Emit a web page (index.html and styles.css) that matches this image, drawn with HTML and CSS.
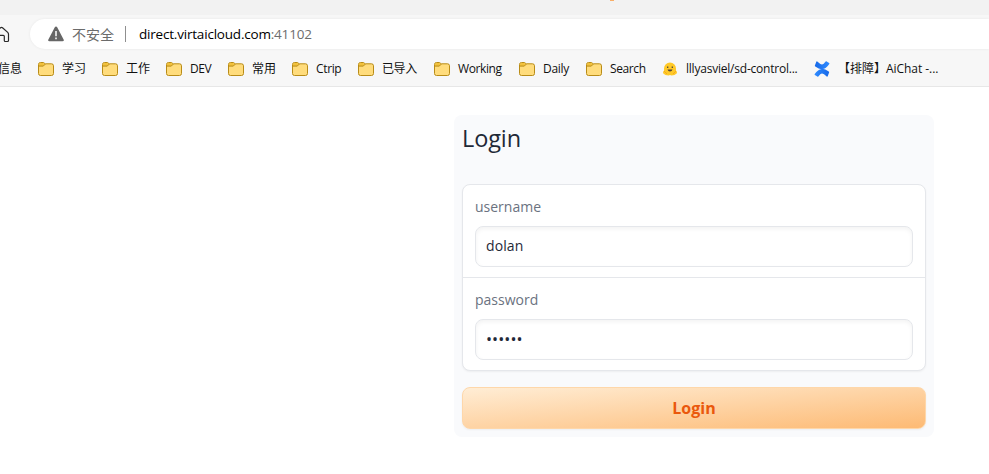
FILE: index.html
```
<!DOCTYPE html>
<html lang="zh-CN">
<head>
<meta charset="utf-8">
<title>Login</title>
<link rel="stylesheet" href="styles.css">
</head>
<body>
<svg width="0" height="0" class="defs" aria-hidden="true">
  <defs>
    <linearGradient id="blue" x1="0" y1="0" x2="1" y2="0"><stop offset="0" stop-color="#1769e8"/><stop offset="1" stop-color="#2f8bff"/></linearGradient>
    <symbol id="folder" viewBox="0 0 16 14">
      <path d="M.5 2.5a2 2 0 0 1 2-2h3l1.700 1.300h6.300a2 2 0 0 1 2 2v7.700a2 2 0 0 1-2 2h-11a2 2 0 0 1-2-2z" fill="#ffdc7c" stroke="#b98c17"/>
      <path d="M1 2.500A1.500 1.500 0 0 1 2.500 1h2.800L7 2.200 5.300 4H1z" fill="#f2c13c"/>
      <path d="M.8 4.100h4.500l2-2" fill="none" stroke="#b98c17"/>
    </symbol>
  </defs>
</svg>
<header class="chrome">
  <div class="tabstrip"><span class="tab-dot"></span></div>
  <div class="toolbar">
    <svg class="home" width="10" height="17" viewBox="0 0 10 17"><path d="M-6 8 .5 1.800q1-.9 2 0L7.700 6.400q.8.800.8 1.800v6.300q0 1-1 1H5.200q-.9 0-.9-1v-4.200q0-1-1-1H0" fill="none" stroke="#292929" stroke-width="1.200"/></svg>
    <div class="address">
      <svg width="16" height="16" viewBox="0 0 16 16"><path d="M8 .5q.8 0 1.200.8l6.400 12.100q.9 1.800-1.100 1.800h-13Q-.5 15.200.4 13.400L6.800 1.300Q7.200.5 8 .5z" fill="#666"/><path d="M8 5v5.200M8 11.500v1.700" stroke="#fff" stroke-width="1.500"/></svg>
      <span class="insecure">不安全</span>
      <span class="sep"></span>
      <span class="url">direct.virtaicloud.com<span class="port">:41102</span></span>
    </div>
  </div>
  <nav class="bookmarks">
    <span class="cut">信息</span>
    <a class="bm"><svg class="folder"><use href="#folder"/></svg><span class="w24">学习</span></a>
    <a class="bm"><svg class="folder"><use href="#folder"/></svg><span class="w24">工作</span></a>
    <a class="bm"><svg class="folder"><use href="#folder"/></svg><span class="w22">DEV</span></a>
    <a class="bm"><svg class="folder"><use href="#folder"/></svg><span class="w24">常用</span></a>
    <a class="bm"><svg class="folder"><use href="#folder"/></svg><span class="w26">Ctrip</span></a>
    <a class="bm"><svg class="folder"><use href="#folder"/></svg><span class="w36">已导入</span></a>
    <a class="bm"><svg class="folder"><use href="#folder"/></svg><span class="w45">Working</span></a>
    <a class="bm"><svg class="folder"><use href="#folder"/></svg><span class="w27">Daily</span></a>
    <a class="bm"><svg class="folder"><use href="#folder"/></svg><span class="w36">Search</span></a>
    <a class="bm"><svg width="16" height="16" viewBox="0 0 16 16"><path d="M8 1.500a6 6 0 0 1 6 6v2q1.700 1.500.7 3-1.800 2-5.200 2l-1.500-.5-1.500.5q-3.400 0-5.200-2-1-1.500.7-3v-2a6 6 0 0 1 6-6z" fill="#ffc928"/><path d="M5.700 5.500v1.500M10.300 5.500v1.500" stroke="#45413e" stroke-width="1.200"/><path d="M5.500 8.600h5Q10 10.600 8 10.600T5.500 8.600z" fill="#594430"/><path d="m2 10 3 3M14 10l-3 3" stroke="#f6a91e"/></svg><span class="w112">lllyasviel/sd-control...</span></a>
    <a class="bm"><svg width="16" height="16" viewBox="0 0 16 16"><path id="wave" d="M2.300.7.900 4.500q-.3.700.4 1.100 3.900 2.800 7 2.500 3.700-.3 7-5.100.4-.6-.2-.9L12.300.3q-.5-.2-.9.400-1.700 2.500-3.300 2.700-1.600.2-4.800-2.900-.6-.5-1 .2z" fill="url(#blue)"/><use href="#wave" transform="rotate(180 8 8)"/></svg><span class="chat">【排障】AiChat -...</span></a>
  </nav>
</header>
<main>
  <form class="card">
    <h1>Login</h1>
    <div class="fields">
      <label><span>username</span><input type="text" value="dolan"></label>
      <label><span>password</span><input class="secret" type="password" value="dolan1"></label>
    </div>
    <button type="button">Login</button>
  </form>
</main>
</body>
</html>
```
FILE: styles.css
```
* { box-sizing: border-box; }
body { margin: 0; width: 989px; height: 474px; overflow: hidden; background: #fff; font-family: "Open Sans", "Noto Sans CJK SC", sans-serif; }
svg { flex: none; display: block; }
.defs { position: absolute; }
.chrome { height: 87px; background: #f7f7f7; border-bottom: 1px solid #e7e7e7; }
.tabstrip { height: 15px; background: #f2f2f2; display: flex; }
.tab-dot { width: 4px; height: 1px; margin-left: 610px; background: #f8ae68; }
.toolbar { height: 38px; display: flex; padding-top: 4px; }
.home { margin: 7px 20px 0 0; }
.address { flex: 1; height: 30px; background: #fff; border-radius: 15px 0 0 15px; display: flex; align-items: center; padding-left: 18px; box-shadow: 0 0 3px #0001; white-space: nowrap; }
.insecure { width: 42px; margin-left: 8px; color: #6b6b6b; font-size: 14px; }
.sep { width: 1px; height: 16px; margin: 0 13px 0 11px; background: #8f8f8f; }
.url { color: #000; font-size: 13.500px; letter-spacing: -.2px; }
.port { color: #6d6d6d; }
.bookmarks { height: 32px; display: flex; align-items: center; gap: 16px; font-size: 12px; line-height: 18px; color: #111; white-space: nowrap; }
.cut { width: 22px; direction: rtl; }
.bm { display: flex; align-items: center; gap: 8px; }
.folder { width: 16px; height: 14px; }
.w22 { width: 22px; letter-spacing: -.5px; }
.w24 { width: 24px; }
.w26 { width: 26px; letter-spacing: -.35px; }
.w27 { width: 27px; letter-spacing: -.3px; }
.w36 { width: 36px; letter-spacing: -.4px; }
.w45 { width: 45px; letter-spacing: -.4px; }
.w112 { width: 112px; letter-spacing: -.22px; }
.chat { letter-spacing: -.03px; }
main { padding: 28px 0 0 454px; }
.card { width: 480px; height: 322px; padding: 8px; border-radius: 8px; background: #f9fafc; }
h1 { margin: 0; height: 61px; font-size: 23.500px; line-height: 31px; font-weight: 400; color: #1f2937; letter-spacing: -.1px; }
.fields { height: 187px; border: 1px solid #e5e7eb; border-radius: 8px; background: #fff; box-shadow: 0 1px 2px #0000000d; }
label { display: block; height: 92px; padding: 12px; font-size: 14px; line-height: 19px; color: #6b7280; }
label + label { height: 93px; border-top: 1px solid #e5e7eb; }
label span { display: block; height: 29px; }
input { display: block; width: 438px; height: 41px; padding: 0 10px 2px; border: 1px solid #e5e7eb; border-radius: 8px; background: #fff; box-shadow: inset 0 2px 4px #0000000d; font: 14px "Open Sans", sans-serif; letter-spacing: .1px; color: #1f2937; outline: 0; }
.secret { font-size: 16px; letter-spacing: .1px; }
button { display: block; width: 464px; height: 42px; margin-top: 16px; border: 1px solid #fed7aa; border-radius: 8px; background: linear-gradient(to bottom right, #ffedd5, #fdba74); box-shadow: 0 1px 2px #0000000d; color: #ea580c; font: 700 16px "Open Sans", sans-serif; }
```
